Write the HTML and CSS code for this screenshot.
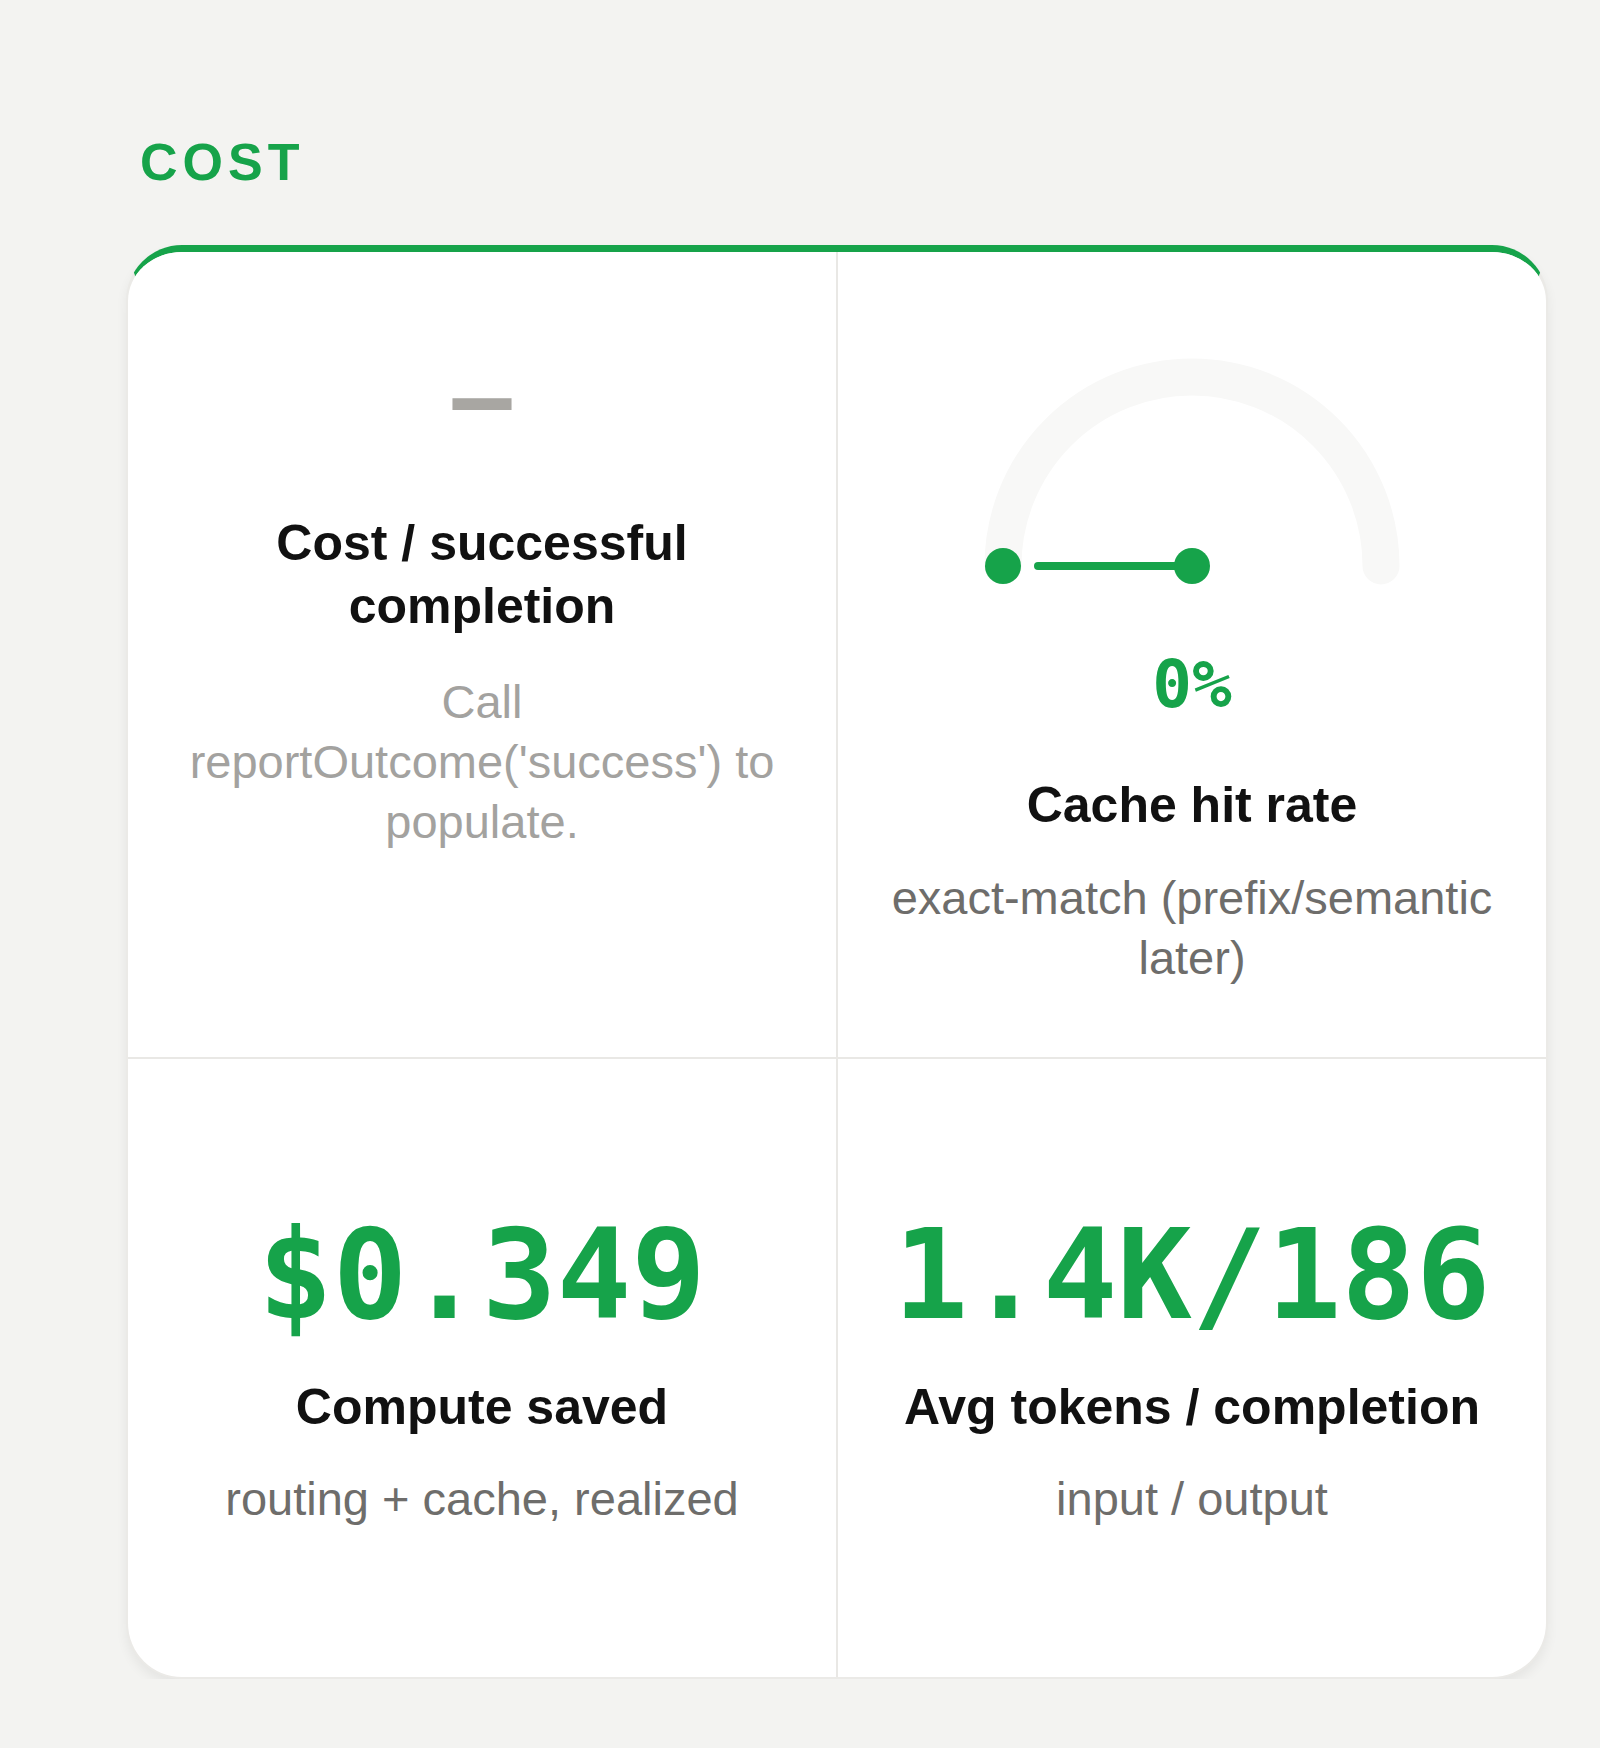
FILE: index.html
```html
<!DOCTYPE html>
<html lang="en">
<head>
<meta charset="UTF-8">
<meta name="viewport" content="width=device-width, initial-scale=1.0">
<title>Cost</title>
<link rel="stylesheet" href="styles.css">
</head>
<body>
  <section class="group">
    <h2 class="group-title">COST</h2>

    <div class="stats">
      <div class="stat">
        <div class="stat-empty">—</div>
        <div class="stat-label">Cost / successful completion</div>
        <div class="stat-note muted">Call reportOutcome('success') to populate.</div>
      </div>

      <div class="stat">
        <svg class="gauge" width="420" height="228" viewBox="0 0 420 228">
          <path d="M 21 208 A 189 189 0 0 1 399 208" fill="none" stroke="#f8f8f7" stroke-width="37" stroke-linecap="round"/>
          <circle cx="21" cy="208" r="18" fill="#16a34a"/>
          <line x1="210" y1="208" x2="56" y2="208" stroke="#16a34a" stroke-width="8" stroke-linecap="round"/>
          <circle cx="210" cy="208" r="18" fill="#16a34a"/>
        </svg>
        <div class="gauge-value">0%</div>
        <div class="stat-label">Cache hit rate</div>
        <div class="stat-note">exact-match (prefix/semantic later)</div>
      </div>

      <div class="stat stat-big">
        <div class="stat-value">$0.349</div>
        <div class="stat-label">Compute saved</div>
        <div class="stat-note">routing + cache, realized</div>
      </div>

      <div class="stat stat-big">
        <div class="stat-value">1.4K/186</div>
        <div class="stat-label">Avg tokens / completion</div>
        <div class="stat-note">input / output</div>
      </div>
    </div>
  </section>
</body>
</html>
```

FILE: styles.css
```css
body {
  margin: 0;
  padding: 0;
  background-color: #f3f3f1;
  font-family: "Liberation Sans", Arial, sans-serif;
  color: #111;
}

.group {
  padding: 131px 52px 0 126px;
}

.group-title {
  margin: 0 0 52px 14px;
  font-size: 52px;
  line-height: 1.2;
  font-weight: bold;
  letter-spacing: 5px;
  color: #16a34a;
}

.stats {
  display: grid;
  grid-template-columns: 1fr 1fr;
  gap: 2px;
  background-color: #e9e8e5;
  border: 2px solid #ebeae7;
  border-top: 7px solid #16a34a;
  border-radius: 56px;
  overflow: hidden;
  box-shadow: 0 6px 12px rgba(0, 0, 0, 0.06);
}

.stat {
  display: flex;
  flex-direction: column;
  align-items: center;
  text-align: center;
  background-color: #fff;
  padding: 100px 50px 70px;
}

.stat-big {
  padding-top: 154px;
  padding-bottom: 149px;
}

.stat-empty {
  font-family: "DejaVu Sans Mono", monospace;
  font-weight: bold;
  font-size: 98px;
  line-height: 1;
  color: #a8a6a2;
  margin: -4px 0 66px;
}

.stat-value {
  font-family: "DejaVu Sans Mono", monospace;
  font-weight: bold;
  font-size: 124px;
  line-height: 1;
  color: #16a34a;
  margin-bottom: 39px;
}

.gauge {
  display: block;
  margin-top: 6px;
}

.gauge-value {
  font-family: "DejaVu Sans Mono", monospace;
  font-weight: bold;
  font-size: 66px;
  line-height: 1;
  color: #16a34a;
  margin: 66px 0 56px;
}

.stat-label {
  font-size: 50px;
  line-height: 1.25;
  font-weight: bold;
  color: #111;
}

.stat-note {
  margin-top: 31px;
  font-size: 47px;
  line-height: 1.27;
  color: #6e6d6b;
}

.stat-big .stat-note {
  margin-top: 30px;
}

.stat-note.muted {
  color: #a3a29f;
  margin-top: 35px;
}
```
